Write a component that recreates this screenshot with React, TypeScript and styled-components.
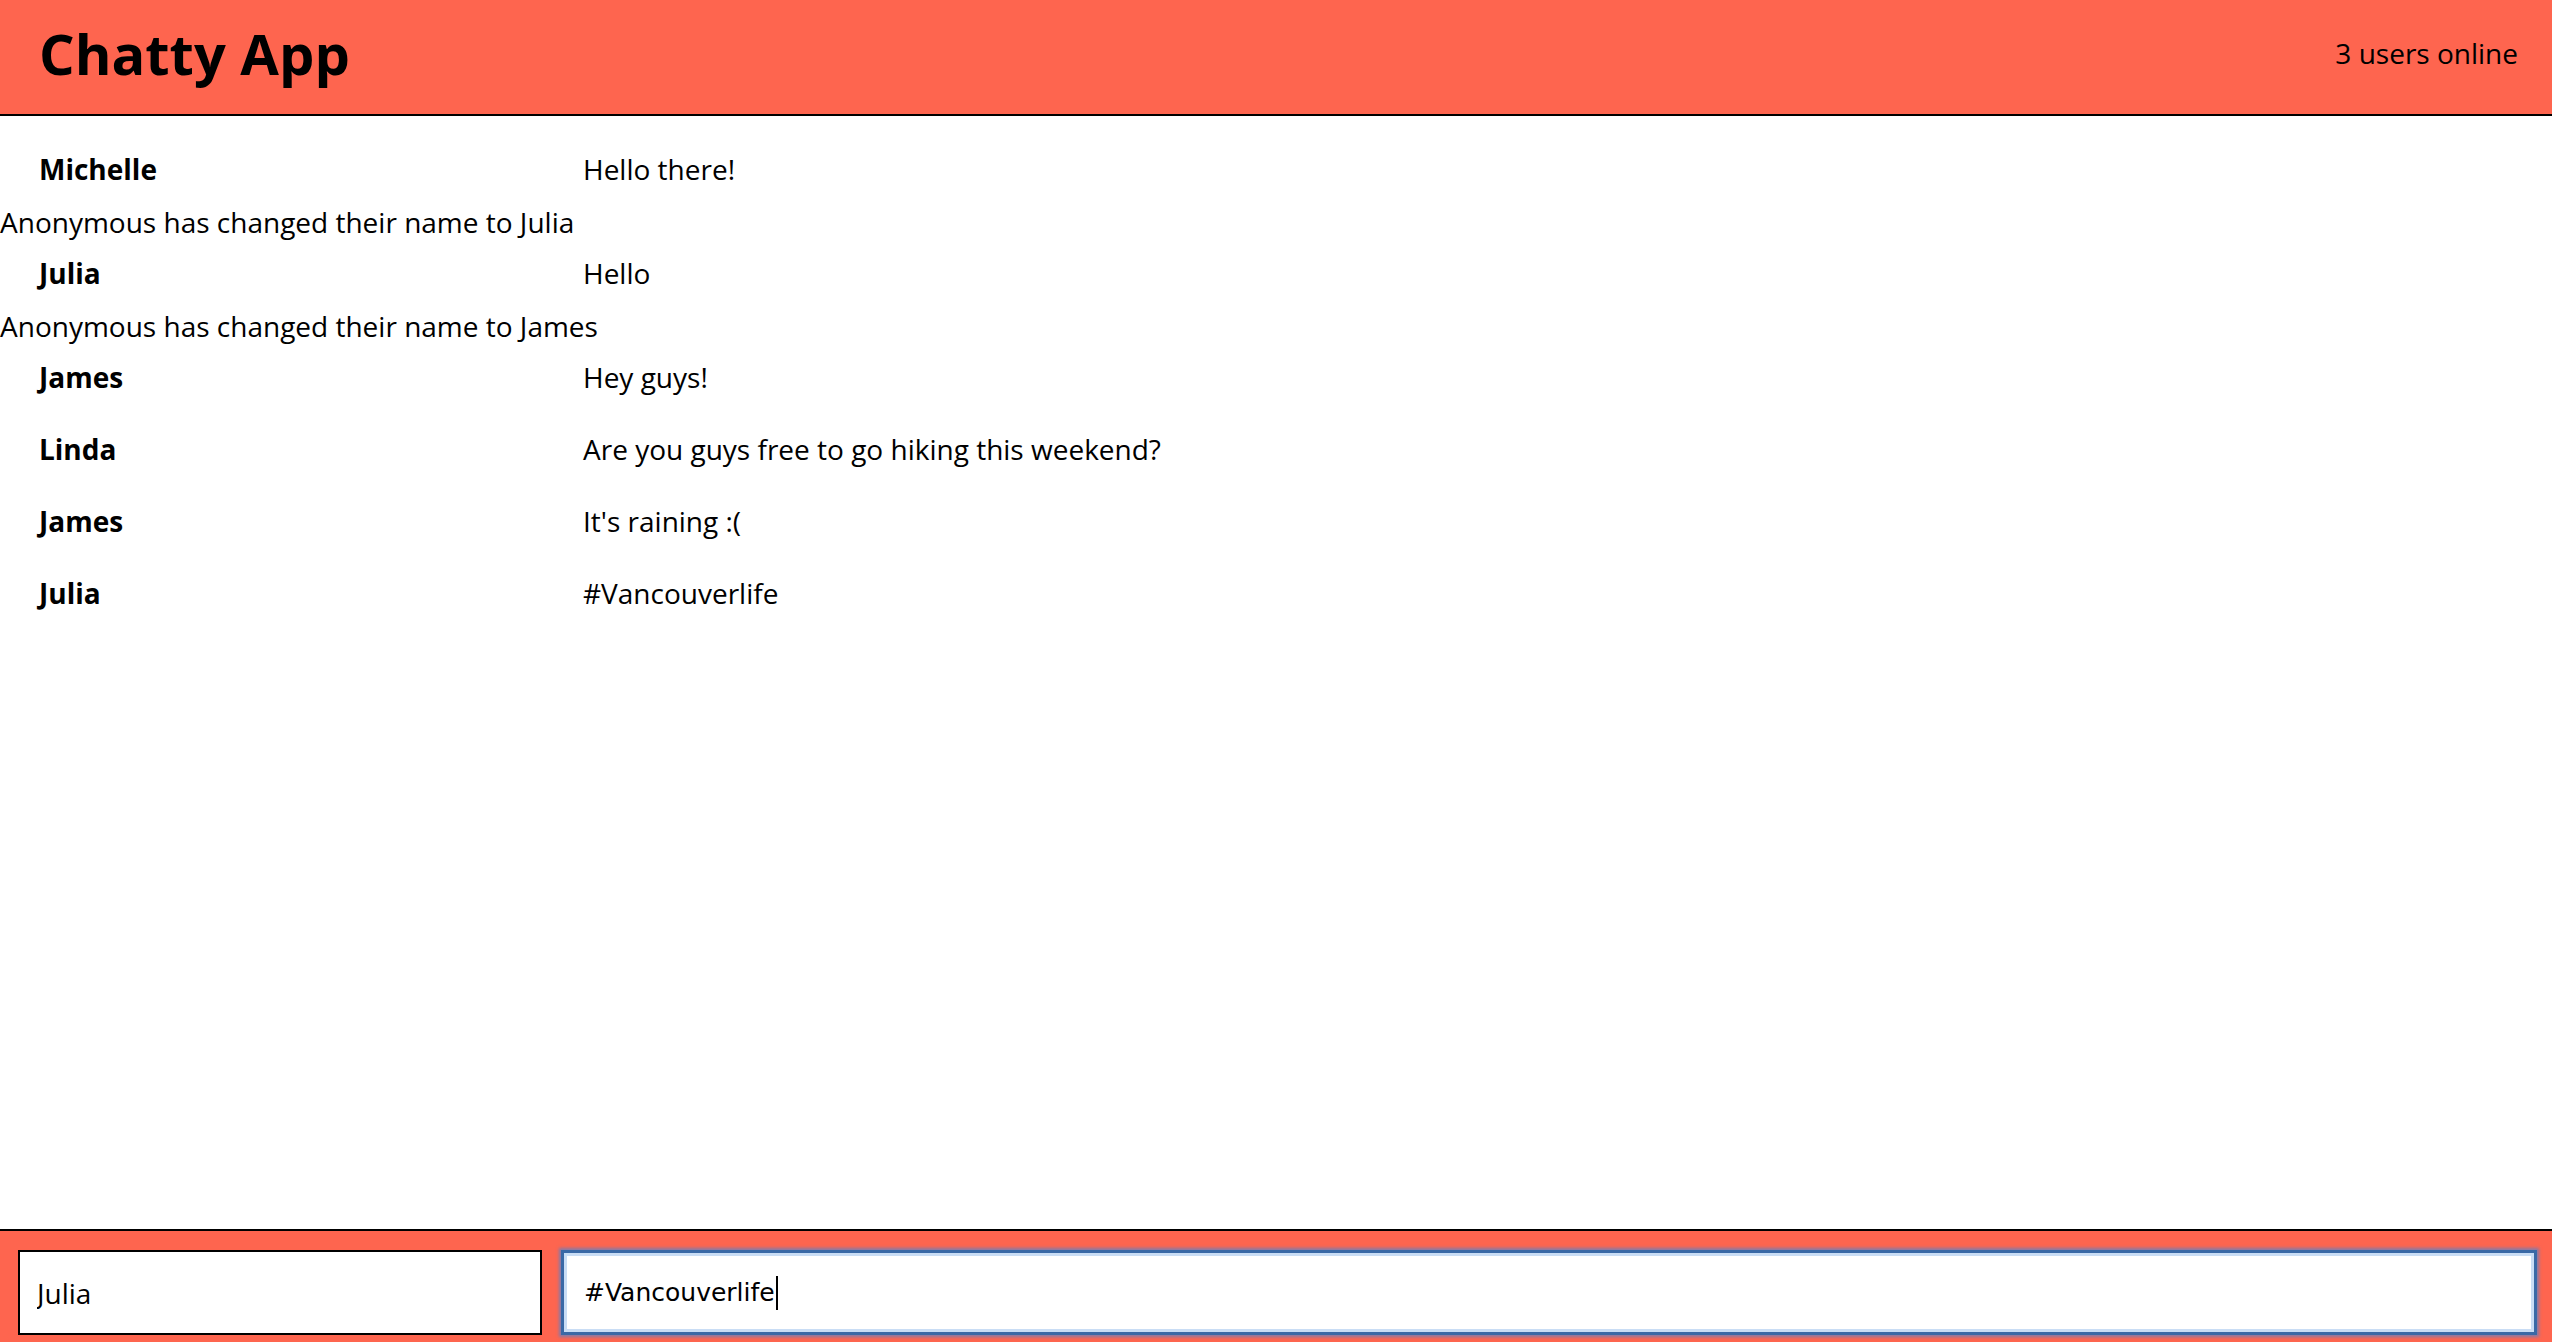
import React from "react";
import styled, { createGlobalStyle } from "styled-components";

const GlobalStyle = createGlobalStyle`
  html, body {
    margin: 0;
    padding: 0;
    background: #ffffff;
    font-family: "Open Sans", "Liberation Sans", sans-serif;
    font-size: 28px;
    color: #000;
  }
  * { box-sizing: border-box; }
`;

const CORAL = "#fe654f";

const Page = styled.div`
  display: flex;
  flex-direction: column;
  height: 100vh;
  overflow: hidden;
`;

const NavBar = styled.nav`
  display: flex;
  align-items: center;
  justify-content: space-between;
  height: 116px;
  padding: 0 34px 8px 39px;
  background: ${CORAL};
  border-bottom: 2px solid #000;
  flex-shrink: 0;
`;

const Brand = styled.h1`
  margin: 0;
  font-size: 56px;
  font-weight: 700;
  line-height: 1;
`;

const Counter = styled.span`
  font-size: 28px;
  font-weight: 400;
`;

const MessageList = styled.main`
  flex: 1;
  padding-top: 18px;
  overflow: hidden;
`;

const MessageRow = styled.div`
  display: grid;
  grid-template-columns: 544px 1fr;
  align-items: center;
  height: 72px;
  padding-left: 39px;
  line-height: 1.2;
`;

const Username = styled.span`
  font-weight: 700;
`;

const Content = styled.span`
  font-weight: 400;
`;

const Notification = styled.div`
  height: 32px;
  line-height: 32px;
  font-size: 28px;
`;

const Footer = styled.footer`
  display: flex;
  gap: 19px;
  height: 113px;
  padding: 19px 15px 0 18px;
  background: ${CORAL};
  border-top: 2px solid #000;
  flex-shrink: 0;
`;

const NameInput = styled.input`
  width: 524px;
  height: 85px;
  padding: 0 17px;
  border: 2px solid #000;
  background: #fff;
  font-family: "Open Sans", "Liberation Sans", sans-serif;
  font-size: 28px;
  color: #000;
  outline: none;
`;

const MessageField = styled.div`
  position: relative;
  flex: 1;
  display: flex;
  height: 85px;
`;

const MessageInput = styled.input`
  flex: 1;
  height: 85px;
  padding: 0 20px;
  border: 3px solid #3a69a6;
  background: #fff;
  box-shadow: inset 0 0 0 3px #c9ddf5, 0 0 3px 2px rgba(90, 130, 200, 0.75);
  font-family: "DejaVu Sans", "Liberation Sans", sans-serif;
  font-size: 25px;
  color: #000;
  outline: none;
  caret-color: #000;
`;

const Caret = styled.span`
  position: absolute;
  left: 215px;
  top: 26px;
  width: 2px;
  height: 34px;
  background: #000;
  pointer-events: none;
`;

type Item =
  | { kind: "message"; user: string; text: string }
  | { kind: "notification"; text: string };

const items: Item[] = [
  { kind: "message", user: "Michelle", text: "Hello there!" },
  { kind: "notification", text: "Anonymous has changed their name to Julia" },
  { kind: "message", user: "Julia", text: "Hello" },
  { kind: "notification", text: "Anonymous has changed their name to James" },
  { kind: "message", user: "James", text: "Hey guys!" },
  { kind: "message", user: "Linda", text: "Are you guys free to go hiking this weekend?" },
  { kind: "message", user: "James", text: "It's raining :(" },
  { kind: "message", user: "Julia", text: "#Vancouverlife" },
];

export default function App() {
  return (
    <Page>
      <GlobalStyle />
      <NavBar>
        <Brand>Chatty App</Brand>
        <Counter>3 users online</Counter>
      </NavBar>
      <MessageList>
        {items.map((it, i) =>
          it.kind === "message" ? (
            <MessageRow key={i}>
              <Username>{it.user}</Username>
              <Content>{it.text}</Content>
            </MessageRow>
          ) : (
            <Notification key={i}>{it.text}</Notification>
          )
        )}
      </MessageList>
      <Footer>
        <NameInput defaultValue="Julia" placeholder="Your Name (Optional)" />
        <MessageField>
          <MessageInput
            defaultValue="#Vancouverlife"
            placeholder="Type a message and hit ENTER"
          />
          <Caret />
        </MessageField>
      </Footer>
    </Page>
  );
}
